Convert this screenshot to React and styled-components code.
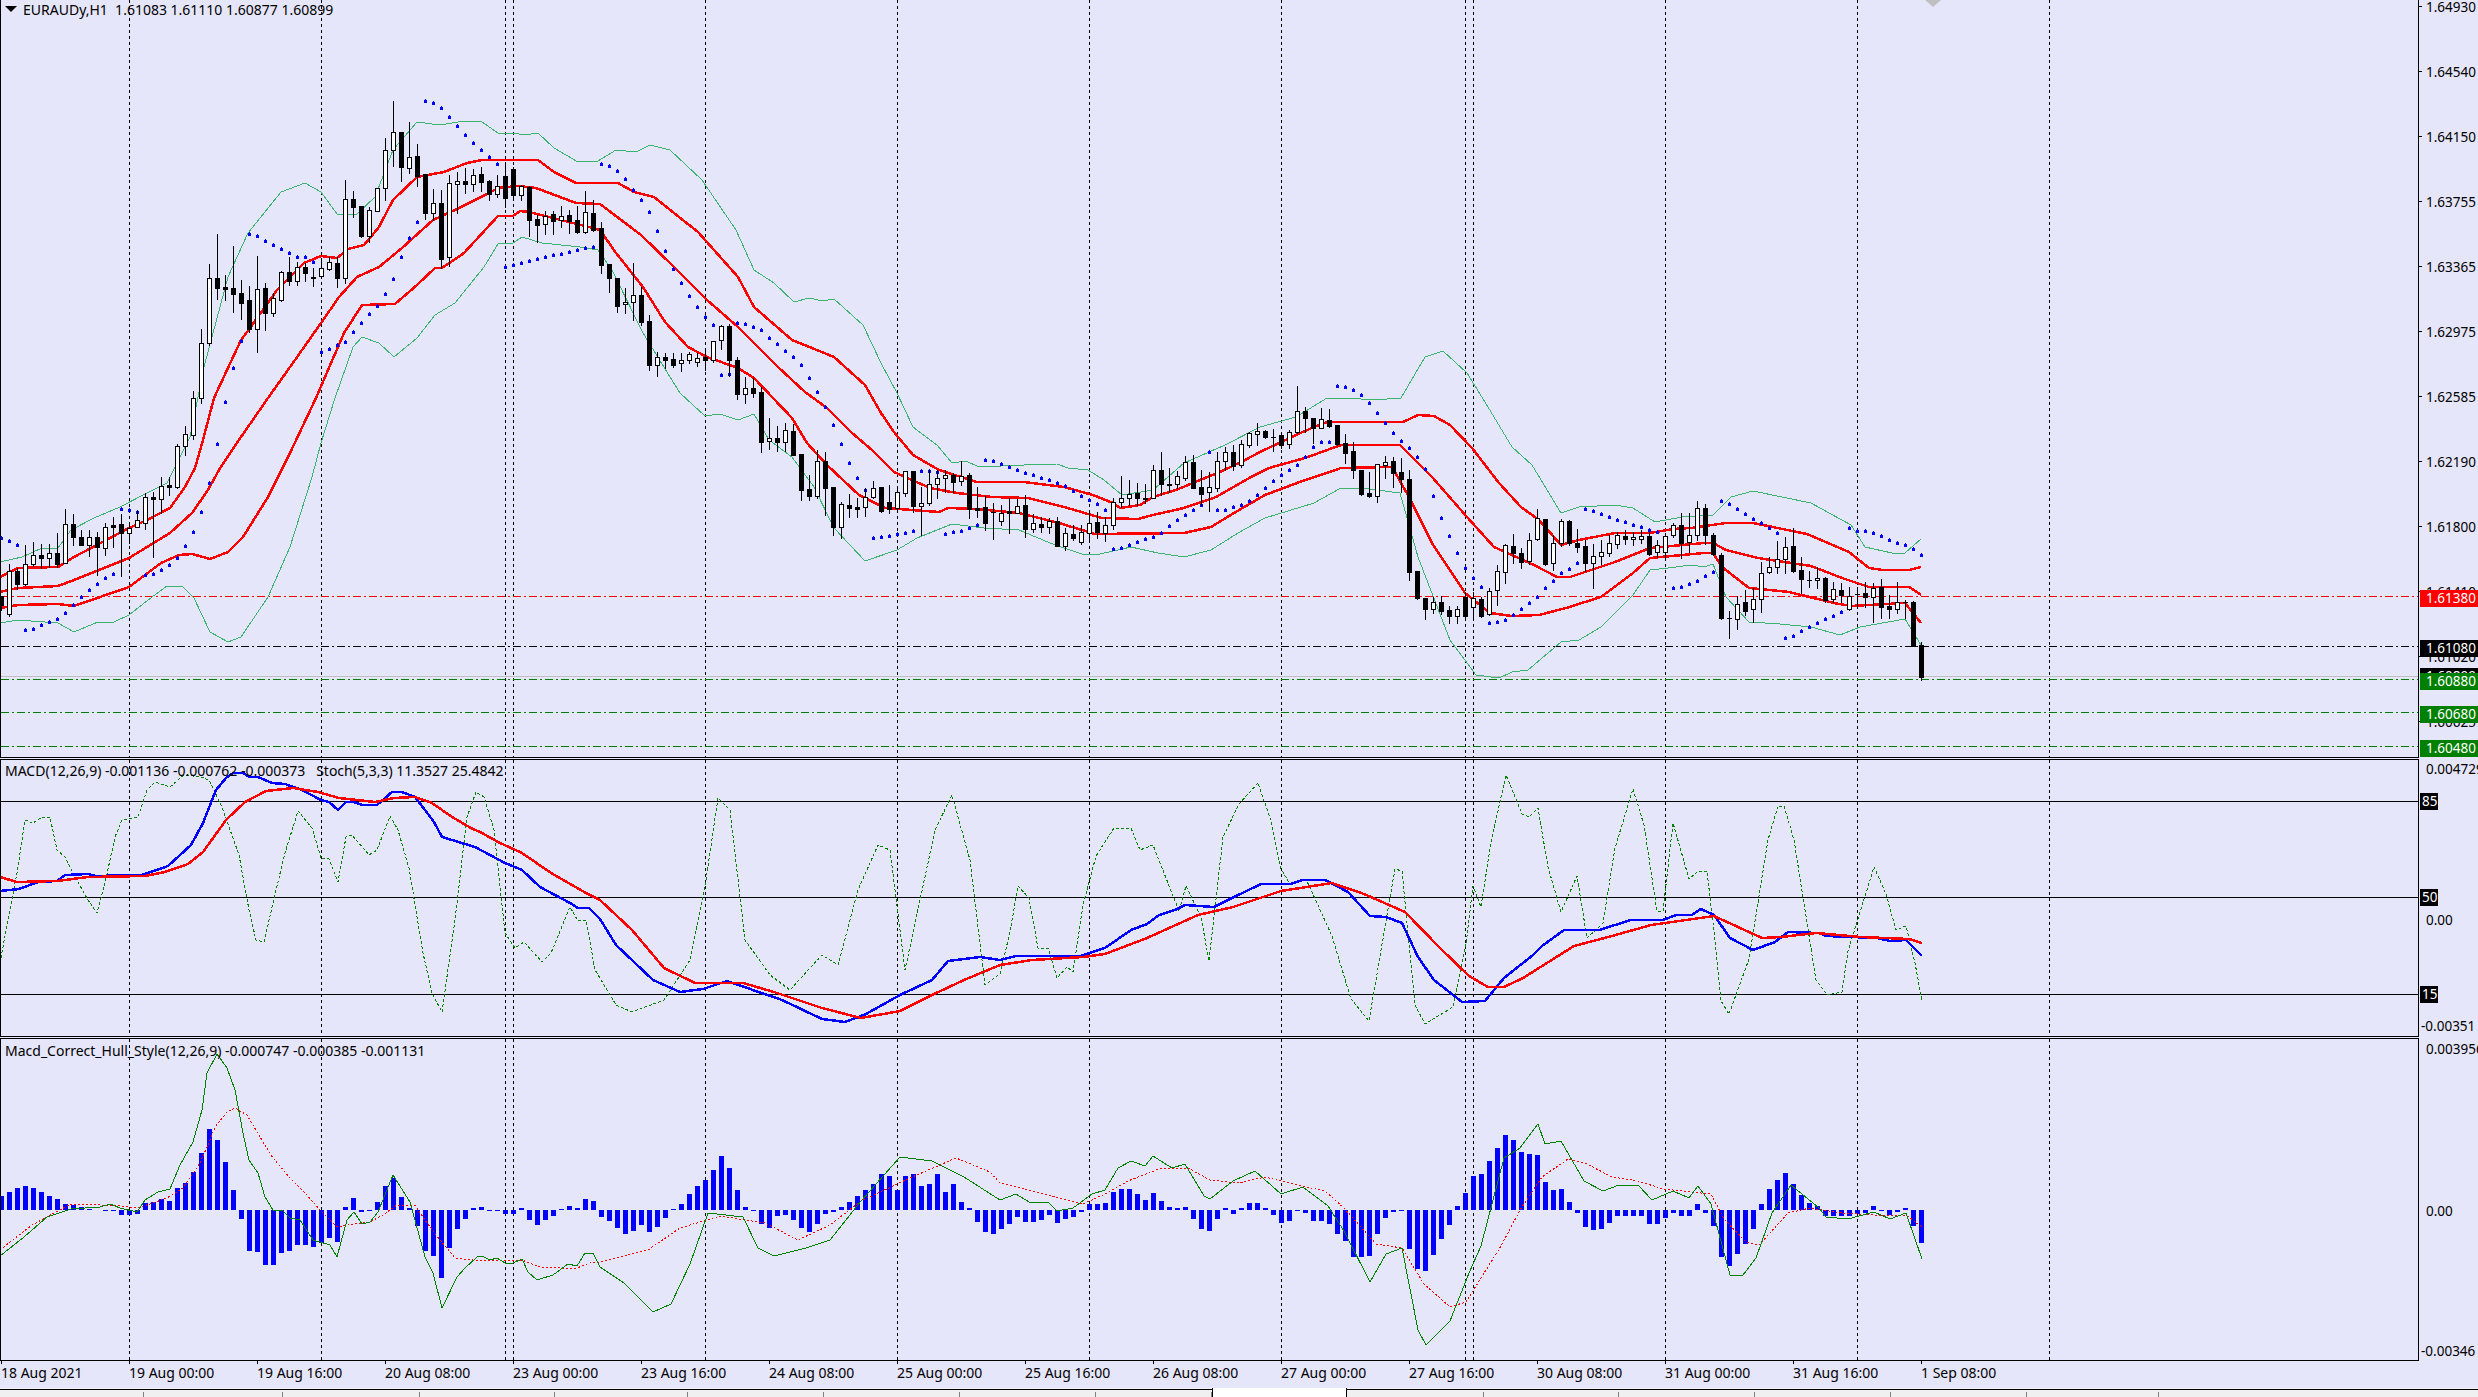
import React from 'react'
import styled, { createGlobalStyle } from 'styled-components'

const GlobalStyle = createGlobalStyle`
  html, body {
    margin: 0;
    padding: 0;
    background: #E6E6FA;
    overflow: hidden;
  }
`

const Terminal = styled.div`
  display: flex;
  flex-direction: column;
  width: 2478px;
  height: 1397px;
  background: #E6E6FA;
  font-family: "Noto Sans", Tahoma, sans-serif;
  font-size: 14px;
  color: #000;
  overflow: hidden;
`

const PaneRow = styled.div`
  display: flex;
  flex: none;
  height: ${p => p.$height}px;
  margin-bottom: ${p => p.$gap || 0}px;
`

const Plot = styled.div`
  position: relative;
  flex: none;
  width: 2418px;
  box-sizing: border-box;
  border-left: 1px solid #000;
  border-top: ${p => (p.$first ? 'none' : '1px solid #000')};
  border-bottom: 1px solid #000;
  overflow: hidden;
`

const Canvas = styled.svg`
  display: block;
  width: 2417px;
  height: 100%;
`

const Legend = styled.div`
  position: absolute;
  left: ${p => p.$left}px;
  top: ${p => p.$top}px;
  line-height: 16px;
  font-size: 14px;
  white-space: pre;
`

const MenuArrow = styled.div`
  position: absolute;
  left: 4px;
  top: 6px;
  width: 0;
  height: 0;
  border-left: 6px solid transparent;
  border-right: 6px solid transparent;
  border-top: 6px solid #000;
`

const Axis = styled.div`
  position: relative;
  flex: none;
  width: 60px;
  box-sizing: border-box;
  border-left: 1px solid #000;
  overflow: hidden;
`

const AxisLabel = styled.div`
  position: absolute;
  left: ${p => p.$left ?? 7}px;
  top: ${p => p.$y - 8}px;
  line-height: 16px;
  font-size: 13.5px;
  white-space: nowrap;
`

const AxisTick = styled.div`
  position: absolute;
  left: 0;
  top: ${p => p.$y}px;
  width: 3px;
  height: 1px;
  background: #000;
`

const PriceTag = styled.div`
  position: absolute;
  left: 1px;
  right: 0;
  top: ${p => p.$top}px;
  height: 17px;
  box-sizing: border-box;
  padding-left: 6px;
  line-height: 17px;
  font-size: 13.5px;
  white-space: nowrap;
  color: #fff;
  background: ${p => p.$bg};
`

const LevelTag = styled.div`
  position: absolute;
  left: 1px;
  top: ${p => p.$y - 8}px;
  width: 18px;
  height: 17px;
  padding-left: 2px;
  box-sizing: border-box;
  line-height: 17px;
  font-size: 13.5px;
  color: #fff;
  background: #000;
`

const TimeAxis = styled.div`
  display: flex;
  flex: none;
  height: 27px;
  padding-left: 1px;
`

const TimeCell = styled.div`
  position: relative;
  flex: none;
  width: 128px;
  padding-top: 3px;
  line-height: 18px;
  font-size: 14px;
  white-space: nowrap;
  &::before {
    content: '';
    position: absolute;
    left: 0;
    top: 0;
    width: 1px;
    height: 3px;
    background: #000;
  }
`

const TabStrip = styled.div`
  display: flex;
  flex: 1;
  padding-top: 1px;
  background: #F0F0F0;
`

const Tab = styled.div`
  position: relative;
  flex: none;
  width: ${p => p.$width}px;
  box-sizing: border-box;
  border-top: 1px solid #000;
  &::after {
    content: '';
    position: absolute;
    right: 0;
    top: 2px;
    bottom: 0;
    width: 1px;
    background: #808080;
  }
`

const ActiveTab = styled.div`
  flex: none;
  width: ${p => p.$width}px;
  margin-top: -1px;
  box-sizing: border-box;
  background: #fff;
  border-left: 1px solid #000;
  border-right: 1px solid #000;
`

const RestOfStrip = styled.div`
  flex: 1;
  border-top: 1px solid #000;
`

const Curve = styled.polyline`
  fill: none;
  stroke: ${p => p.$color};
  stroke-width: ${p => p.$w || 1}px;
  stroke-dasharray: ${p => p.$dash || 'none'};
  stroke-linejoin: round;
  shape-rendering: crispEdges;
`

const Rule = styled.line`
  stroke: ${p => p.$color || '#000'};
  stroke-width: 1px;
  stroke-dasharray: ${p => p.$dash || 'none'};
  shape-rendering: crispEdges;
`

const Fill = styled.path`
  fill: ${p => p.$color};
  shape-rendering: crispEdges;
`

// bar x of index i
const barX = i => 1 + 8 * i

const SEPARATORS = [129, 321, 505, 513, 705, 897, 1089, 1281, 1465, 1473, 1665, 1857, 2049]

// body top, body bottom, high, low, white
const CANDLES = [
  [596,605,596,610,0],[571,614,564,616,1],[571,584,568,589,0],[564,584,545,585,1],[555,564,542,566,1],
  [555,558,544,568,0],[553,558,544,567,1],[553,564,533,567,0],[524,563,509,563,1],[524,537,514,545,0],
  [537,545,530,545,0],[537,545,530,556,1],[537,547,532,575,0],[527,548,523,555,1],[525,527,517,547,0],
  [524,533,514,576,0],[528,533,524,543,1],[520,527,511,527,1],[497,523,493,529,1],[497,499,492,557,0],
  [486,499,477,513,1],[485,487,477,495,0],[446,487,444,488,1],[434,446,426,455,1],[398,435,391,439,1],
  [343,398,329,403,1],[278,343,264,345,1],[278,288,234,299,0],[287,289,275,300,0],[288,294,246,312,0],
  [293,303,280,319,0],[300,329,286,332,0],[289,329,256,352,1],[288,313,283,330,0],[298,313,293,316,1],
  [272,300,271,301,1],[272,281,257,285,0],[267,281,262,285,1],[267,273,263,281,0],[277,278,268,286,0],
  [268,276,258,277,1],[262,269,257,270,1],[263,278,257,287,0],[199,278,180,283,1],[199,207,191,217,0],
  [206,236,206,237,0],[210,236,207,242,1],[188,211,188,211,1],[150,188,138,200,1],[132,150,101,166,1],
  [132,167,132,181,0],[157,168,122,173,1],[156,176,144,186,0],[174,213,174,219,0],[203,213,189,220,1],
  [203,259,190,268,0],[183,257,175,266,1],[181,184,172,213,1],[181,184,168,193,0],[175,184,169,191,1],
  [174,182,167,191,0],[181,194,180,200,0],[186,194,175,197,1],[176,198,165,207,0],[169,195,167,200,0],
  [186,195,185,200,1],[187,220,186,236,0],[219,225,215,242,0],[216,224,211,234,1],[214,221,211,234,0],
  [216,220,206,227,1],[215,221,210,233,0],[220,232,206,233,0],[212,232,191,233,1],[213,230,200,231,0],
  [228,265,222,273,0],[264,278,264,292,0],[278,306,278,312,0],[302,304,288,313,1],[295,302,263,320,1],
  [295,322,287,325,0],[321,365,315,370,0],[357,365,352,376,1],[357,360,353,368,0],[359,365,353,367,0],
  [360,363,353,371,1],[354,360,352,363,1],[358,362,353,366,1],[357,360,350,370,0],[341,360,341,362,1],
  [326,340,325,349,1],[326,360,324,376,0],[360,394,357,399,0],[388,394,377,403,1],[388,393,378,397,0],
  [392,442,387,452,0],[438,441,418,449,1],[438,442,426,451,0],[430,442,423,451,1],[431,455,424,455,0],
  [454,490,454,500,0],[489,496,475,500,0],[461,496,450,498,1],[461,488,452,515,0],[487,527,487,535,0],
  [504,527,502,538,1],[505,508,494,517,0],[507,509,498,517,0],[497,507,488,516,1],[488,497,481,498,1],
  [487,511,487,512,0],[502,509,485,513,0],[492,508,487,510,1],[471,493,471,496,1],[471,506,471,512,0],
  [503,506,487,535,1],[484,503,470,505,1],[478,484,470,498,1],[475,478,470,492,1],[475,482,473,492,0],
  [476,481,461,485,1],[475,509,473,518,0],[508,510,487,517,0],[507,523,496,530,0],[512,512,503,539,0],
  [513,521,505,525,1],[511,513,498,533,0],[506,513,499,513,1],[505,529,495,537,0],[523,529,514,532,1],
  [524,527,517,532,0],[521,527,518,533,1],[521,546,517,546,0],[533,546,528,550,1],[534,538,525,540,0],
  [532,542,525,544,1],[523,533,513,542,1],[522,532,512,538,0],[525,533,517,541,1],[502,525,498,529,1],
  [498,502,476,507,1],[494,498,480,505,1],[493,498,483,505,0],[498,499,484,503,0],[470,498,465,498,1],
  [470,484,452,495,0],[484,485,468,492,0],[476,484,471,488,1],[462,478,456,480,1],[462,488,455,488,0],
  [487,494,470,505,0],[487,492,472,511,1],[461,488,452,491,1],[452,461,447,470,1],[452,466,445,470,0],
  [444,465,440,467,1],[433,445,432,447,1],[431,434,423,445,1],[431,437,430,438,0],[437,437,429,451,0],
  [435,445,432,448,0],[432,444,430,448,1],[411,432,386,433,1],[411,418,407,432,0],[418,428,418,443,0],
  [419,428,408,428,1],[420,426,409,427,0],[425,444,425,445,0],[443,453,434,463,0],[451,470,442,478,0],
  [470,494,470,495,0],[493,496,472,497,0],[464,496,464,502,1],[462,465,456,478,1],[461,473,457,487,0],
  [472,479,458,492,0],[479,572,470,580,0],[571,598,571,599,0],[598,609,598,619,0],[602,609,597,613,1],
  [602,611,596,614,0],[610,616,606,623,0],[609,616,606,623,1],[597,616,592,618,0],[598,607,592,618,1],
  [599,616,597,617,0],[591,614,588,615,1],[571,590,565,605,1],[545,572,544,583,1],[546,553,534,563,0],
  [553,562,548,568,0],[540,561,533,564,1],[518,539,509,540,1],[519,564,519,565,0],[543,563,535,570,1],
  [521,543,519,546,1],[521,543,520,545,0],[543,547,529,552,0],[546,563,540,571,0],[556,563,544,588,1],
  [552,556,540,564,1],[543,553,535,556,1],[535,544,532,548,1],[536,539,530,544,0],[537,539,532,545,1],
  [536,539,530,543,1],[536,554,532,555,0],[545,552,540,557,1],[536,552,533,557,1],[525,535,523,537,1],
  [525,543,513,558,0],[535,542,513,552,1],[508,535,501,540,1],[508,535,504,544,0],[535,554,533,555,0],
  [555,618,553,619,0],[618,618,611,638,0],[604,619,596,629,1],[602,611,590,615,0],[599,609,588,622,1],
  [573,599,562,612,1],[567,572,557,573,1],[559,567,541,573,1],[547,559,537,573,1],[546,571,528,572,0],
  [570,579,557,593,0],[580,580,571,587,0],[578,580,567,588,1],[578,600,577,602,0],[589,599,582,602,1],
  [590,595,583,602,0],[596,609,587,610,1],[594,594,587,608,0],[593,597,582,607,0],[588,597,583,622,1],
  [587,607,579,618,0],[606,609,595,618,0],[602,609,582,613,1],[602,602,600,618,0],[602,646,601,646,0],
  [645,677,642,680,0]
]

const SAR = [
  538,541,545,630,629,625,622,619,613,605,597,590,584,578,574,509,510,512,575,574,
  570,565,558,546,532,512,483,444,402,368,341,234,236,241,245,249,253,257,257,262,
  352,349,345,342,332,323,314,306,294,279,257,238,222,101,103,108,117,126,135,143,
  150,157,164,267,265,263,261,259,257,255,254,252,250,248,247,164,166,171,179,190,
  200,212,231,251,269,283,296,307,317,325,375,374,323,324,327,330,338,344,351,357,
  365,378,392,407,425,444,463,478,490,538,537,536,534,533,531,471,471,472,534,532,
  531,528,525,460,461,464,467,470,473,475,478,480,483,486,491,496,500,504,510,549,
  548,545,542,539,537,533,526,520,515,510,505,452,510,510,507,505,501,495,488,481,
  475,470,465,457,447,442,442,386,387,390,395,403,413,423,433,441,448,457,469,496,
  518,536,553,568,578,587,623,622,620,615,609,603,597,588,581,573,569,563,509,511,
  514,517,520,522,525,527,530,532,null,588,587,584,581,576,572,501,504,509,514,519,
  523,528,533,638,636,631,627,623,619,616,612,528,531,531,533,536,540,543,545,549,555
]

const UPPER_BAND = '0,577 18,568 58,567 74,557 112,537 129,528 147,520 170,508 185,487 195,468 203,440 214,398 241,340 250,328 277,290 304,263 321,256 337,258 348,249 364,245 379,227 393,200 417,177 444,172 467,163 482,160 538,160 554,172 576,183 618,183 634,192 654,197 679,217 698,232 738,277 754,307 792,340 807,346 834,357 865,385 881,413 894,432 913,455 939,470 977,482 1024,482 1064,487 1093,495 1113,503 1120,508 1140,505 1153,497 1176,490 1200,480 1220,472 1245,460 1260,452 1296,435 1314,427 1327,422 1403,422 1418,415 1434,416 1450,425 1472,448 1499,483 1521,507 1539,520 1561,545 1579,540 1615,533 1650,533 1673,529 1691,528 1726,523 1753,523 1807,534 1849,552 1869,568 1883,570 1909,570 1921,567'
const MIDDLE_BAND = '0,592 18,588 58,586 74,580 129,558 170,533 192,513 208,490 219,470 241,437 268,398 295,360 321,323 339,297 357,277 379,267 402,248 433,220 455,210 489,193 498,188 518,186 536,188 576,203 600,204 641,235 674,267 707,300 738,327 778,367 805,392 827,408 852,433 872,450 894,472 930,488 957,493 992,497 1028,498 1064,507 1102,518 1138,519 1153,515 1184,508 1216,497 1251,477 1269,468 1305,458 1341,445 1400,445 1432,477 1467,517 1494,547 1534,565 1557,577 1570,577 1615,562 1650,548 1704,543 1713,543 1726,550 1758,558 1811,566 1842,578 1869,587 1909,587 1921,595'
const LOWER_BAND = '0,608 18,605 58,604 74,606 129,587 161,563 179,555 192,554 210,559 228,552 243,537 268,497 290,453 316,398 344,333 362,305 395,304 417,285 435,268 442,268 464,253 498,216 513,216 520,211 529,212 589,227 600,230 616,253 643,287 665,322 688,347 707,357 738,368 754,378 792,418 807,443 827,465 859,495 885,508 939,512 948,508 977,509 1019,513 1059,523 1095,534 1184,533 1211,527 1234,513 1265,495 1305,480 1327,473 1341,468 1392,467 1409,497 1432,543 1465,593 1490,613 1512,616 1539,615 1566,608 1601,597 1633,573 1650,558 1704,553 1713,553 1722,567 1749,588 1789,592 1834,603 1851,606 1905,603 1921,623'
const GREEN_UPPER = '0,562 22,557 42,548 58,548 71,530 94,518 120,507 147,493 167,483 190,437 204,367 228,277 248,233 281,192 305,183 321,192 337,214 357,214 375,197 393,150 417,122 440,125 464,121 482,122 498,133 513,133 525,135 538,133 554,148 578,162 598,161 616,150 636,152 650,145 670,150 702,180 736,230 754,270 774,283 794,302 809,298 823,301 834,299 863,325 881,363 897,393 913,427 937,445 952,463 966,461 979,467 1024,465 1057,464 1068,468 1088,470 1104,480 1122,495 1153,490 1184,463 1225,445 1260,427 1296,417 1327,398 1347,398 1374,400 1401,398 1425,357 1443,351 1467,373 1488,407 1512,447 1532,465 1561,513 1579,507 1615,505 1633,508 1655,522 1682,517 1713,515 1731,497 1753,491 1811,503 1851,525 1865,547 1892,553 1905,553 1921,539'
const GREEN_LOWER = '0,623 18,620 58,623 74,632 98,622 114,622 129,615 152,597 167,586 183,587 194,598 210,632 228,642 241,637 268,597 290,547 312,477 321,443 335,398 353,347 362,337 379,343 394,357 417,338 435,315 455,303 484,267 498,244 513,243 522,237 542,243 580,247 598,250 612,270 643,333 670,377 680,393 705,416 720,414 738,420 754,414 769,440 792,457 814,487 834,528 865,561 897,550 917,538 952,524 984,528 1019,530 1055,545 1082,554 1100,554 1131,547 1158,553 1184,557 1211,550 1238,533 1265,518 1314,503 1341,488 1369,489 1400,493 1418,557 1450,640 1476,675 1499,678 1512,672 1528,670 1561,642 1579,640 1601,627 1633,595 1650,570 1668,568 1691,565 1704,567 1713,564 1726,597 1749,622 1780,624 1811,627 1840,635 1860,627 1905,619 1921,645'

const MACD_LINE = '0,891 19,889 38,882 57,881 65,875 88,874 96,876 142,875 168,866 191,845 203,823 216,790 226,778 233,773 243,773 249,777 258,777 272,783 285,784 302,790 321,800 329,802 338,810 346,802 354,802 362,805 377,805 392,792 402,792 415,797 425,810 434,822 442,837 475,847 505,863 522,870 540,887 570,903 578,908 589,908 600,919 616,945 653,980 680,992 703,989 727,981 750,989 782,1000 822,1019 845,1022 866,1014 900,995 932,980 948,961 980,957 1000,960 1016,956 1080,956 1105,948 1131,930 1147,924 1159,915 1175,910 1185,905 1214,907 1230,899 1261,884 1290,884 1303,880 1325,880 1348,892 1370,916 1386,917 1402,923 1418,957 1434,980 1462,1002 1485,1001 1504,978 1533,955 1542,946 1564,930 1599,930 1631,920 1663,920 1676,915 1692,915 1701,909 1714,915 1730,938 1753,950 1775,942 1788,932 1819,933 1826,936 1877,938 1890,941 1906,940 1922,956'
const SIGNAL_LINE = '0,877 17,882 57,881 88,877 145,876 165,872 188,864 203,852 226,820 245,802 266,791 293,788 318,792 339,798 375,802 394,798 415,797 432,803 452,817 471,828 482,833 498,842 522,853 551,873 586,893 600,900 632,930 664,968 695,983 743,983 774,992 822,1008 861,1018 900,1011 932,995 964,980 1000,965 1032,960 1083,957 1105,954 1147,938 1198,915 1233,907 1281,891 1332,883 1364,894 1405,912 1440,948 1469,976 1488,987 1504,987 1523,978 1574,946 1612,936 1651,925 1714,916 1762,938 1781,937 1816,933 1861,937 1909,939 1922,943'
const STOCH_LINE = '0,963 8,920 17,873 25,820 33,823 42,817 50,817 57,850 65,857 73,873 88,900 97,913 105,883 115,837 122,820 138,817 147,790 155,782 170,787 184,775 201,777 209,780 222,807 239,855 249,910 256,940 264,942 276,890 285,853 298,811 312,828 321,858 329,859 338,882 346,837 352,835 369,855 377,850 390,816 398,830 409,868 423,953 432,993 442,1012 455,920 467,817 476,792 484,797 494,830 505,933 515,948 524,942 542,962 551,953 570,907 578,921 586,920 595,970 600,978 616,1005 632,1012 664,1000 690,960 706,880 718,798 730,810 745,940 770,975 790,990 822,955 838,965 858,890 878,845 890,850 905,970 935,830 952,795 970,860 985,985 1000,974 1010,932 1018,886 1029,898 1038,948 1048,948 1057,978 1067,967 1073,972 1083,905 1096,856 1114,828 1131,828 1140,850 1153,845 1179,911 1186,886 1201,917 1209,961 1223,837 1239,804 1258,783 1271,821 1281,869 1290,884 1306,879 1332,936 1351,999 1369,1021 1386,921 1395,869 1402,871 1415,1005 1425,1024 1453,1007 1466,944 1473,886 1481,907 1491,842 1506,775 1522,814 1529,817 1538,808 1548,867 1561,912 1577,876 1587,938 1603,923 1615,848 1633,789 1644,825 1657,911 1663,911 1673,823 1689,879 1698,871 1707,871 1714,932 1721,1001 1729,1014 1749,959 1768,840 1778,806 1784,806 1794,840 1816,980 1827,995 1842,992 1848,951 1874,867 1886,894 1896,930 1906,926 1915,963 1922,1001'

const HULL_BARS = [
  14,18,22,24,22,18,14,11,6,5,3,1,0,-1,-1,-5,-5,-4,7,8,
  11,9,22,27,38,57,81,70,48,20,-9,-41,-42,-55,-55,-43,-41,-35,-35,-37,
  -33,-28,-32,3,12,-2,-1,8,24,32,13,2,-16,-41,-46,-68,-38,-19,-9,2,
  3,-1,-1,-4,-4,2,-10,-15,-10,-6,1,4,2,11,9,-7,-11,-18,-24,-21,
  -15,-22,-17,-8,1,6,16,24,30,40,54,42,20,3,-1,-14,-18,-6,-5,-10,
  -18,-22,-14,-4,-2,3,8,14,20,26,36,34,20,34,36,24,26,36,18,26,
  8,2,-12,-22,-24,-19,-14,-7,-12,-12,-10,-5,-13,-9,-7,-2,6,6,7,18,
  21,21,16,10,17,9,3,2,3,-9,-19,-21,-9,2,-4,2,7,7,2,-5,
  -13,-11,-1,-3,-11,-11,-14,-24,-31,-47,-47,-46,-24,-8,-2,-1,-39,-59,-61,-45,
  -29,-15,4,17,34,36,49,62,75,70,58,56,55,28,20,21,8,-3,-17,-20,
  -19,-13,-6,-6,-6,-6,-14,-14,-8,-3,-6,-6,6,-3,-16,-47,-56,-44,-34,-19,
  6,21,30,37,26,15,7,4,-6,-6,-6,-6,-4,-3,4,-1,-5,-2,2,-16,-33
]
const HULL_ZERO = 1210

const HULL_LINE = '0,1256 24,1237 47,1217 71,1209 100,1207 110,1204 120,1208 137,1212 145,1200 158,1192 170,1189 180,1165 193,1142 202,1110 207,1073 217,1054 227,1068 235,1090 243,1133 249,1160 258,1173 265,1197 273,1210 282,1210 290,1218 300,1220 313,1240 330,1245 337,1257 347,1220 354,1212 362,1224 370,1222 378,1212 393,1175 410,1202 425,1257 433,1273 442,1308 457,1277 465,1268 477,1257 482,1256 490,1260 497,1258 505,1263 513,1263 522,1259 528,1272 537,1280 553,1275 568,1264 577,1266 585,1253 593,1253 600,1267 624,1283 653,1312 671,1304 690,1264 708,1213 743,1217 758,1248 774,1256 806,1248 830,1240 861,1201 900,1157 932,1161 964,1177 1000,1200 1016,1194 1029,1202 1048,1202 1057,1211 1073,1208 1092,1194 1105,1190 1118,1168 1131,1161 1145,1166 1153,1156 1172,1168 1185,1164 1204,1196 1210,1199 1233,1181 1255,1171 1281,1194 1303,1187 1328,1206 1344,1231 1370,1282 1386,1254 1402,1248 1418,1330 1426,1345 1450,1321 1469,1273 1481,1246 1504,1158 1520,1148 1538,1124 1545,1144 1561,1141 1584,1181 1603,1191 1619,1185 1638,1185 1652,1200 1673,1191 1689,1198 1698,1186 1711,1204 1730,1275 1743,1275 1756,1258 1772,1213 1791,1185 1819,1208 1826,1217 1848,1219 1874,1212 1890,1219 1906,1213 1922,1259'
const HULL_SIGNAL = '0,1250 32,1225 71,1204 100,1205 115,1205 137,1208 153,1203 167,1198 183,1188 200,1163 210,1140 215,1127 227,1112 235,1108 247,1115 260,1137 273,1158 290,1178 307,1195 320,1210 337,1227 353,1224 370,1222 383,1215 397,1205 415,1205 425,1220 440,1240 455,1258 473,1260 503,1260 522,1260 540,1267 560,1268 577,1268 590,1263 600,1262 648,1250 680,1228 720,1216 765,1223 798,1240 830,1225 861,1201 910,1178 956,1158 990,1172 1000,1183 1051,1196 1083,1204 1105,1194 1128,1181 1159,1169 1188,1168 1210,1180 1239,1183 1265,1177 1293,1184 1325,1191 1344,1208 1376,1244 1402,1248 1424,1284 1450,1307 1466,1302 1501,1246 1520,1210 1542,1177 1568,1159 1587,1164 1612,1177 1638,1181 1663,1189 1711,1194 1724,1219 1746,1242 1759,1245 1788,1213 1810,1208 1842,1213 1874,1215 1906,1215 1922,1227'

const MAIN_TICKS = [
  [6, '1.64930'], [71, '1.64540'], [136, '1.64150'], [201, '1.63755'], [266, '1.63365'], [331, '1.62975'],
  [396, '1.62585'], [461, '1.62190'], [526, '1.61800'], [591, '1.61410'], [656, '1.61020'], [721, '1.60625'],
]

const PRICE_TAGS = [
  [590, '1.61380', '#FF0000'], [640, '1.61080', '#000'], [668, '1.60899', '#000'],
  [673, '1.60880', '#008000'], [706, '1.60680', '#008000'], [740, '1.60480', '#008000'],
]

const TIME_LABELS = [
  '18 Aug 2021', '19 Aug 00:00', '19 Aug 16:00', '20 Aug 08:00', '23 Aug 00:00', '23 Aug 16:00',
  '24 Aug 08:00', '25 Aug 00:00', '25 Aug 16:00', '26 Aug 08:00', '27 Aug 00:00', '27 Aug 16:00',
  '30 Aug 08:00', '31 Aug 00:00', '31 Aug 16:00', '1 Sep 08:00',
]

const LEFT_TABS = [144, 139, 137, 135, 133, 136, 136, 136]
const RIGHT_TABS = [137, 135, 136, 136, 136, 132]

function candlePaths() {
  let dark = ''
  let light = ''
  CANDLES.forEach(([top, bottom, high, low, white], i) => {
    const x = barX(i)
    dark += `M${x} ${high}h1V${low + 1}h-1z`
    dark += `M${x - 2} ${top}h5V${bottom + 1}h-5z`
    if (white && bottom - top >= 2) light += `M${x - 1} ${top + 1}h3V${bottom}h-3z`
  })
  return { dark, light }
}

function sarPath() {
  return SAR.map((y, i) => {
    if (y == null) return ''
    const x = barX(i)
    return `M${x - 1} ${y - 1}h3v3h-3zM${x} ${y - 2}h1v1h-1z`
  }).join('')
}

function histPath() {
  return HULL_BARS.map((v, i) => {
    if (v === 0) return ''
    const x = barX(i)
    const top = v > 0 ? HULL_ZERO - v : HULL_ZERO
    return `M${x - 2} ${top}h5v${Math.abs(v)}h-5z`
  }).join('')
}

const Separators = ({ top, bottom }) => (
  <>
    {SEPARATORS.map(x => (
      <Rule key={x} x1={x + 0.5} x2={x + 0.5} y1={top} y2={bottom} $dash="3 3" />
    ))}
  </>
)

const HLine = ({ y, color, dash }) => (
  <Rule x1={1} x2={2418} y1={y + 0.5} y2={y + 0.5} $color={color} $dash={dash} />
)

const MainPane = () => {
  const { dark, light } = candlePaths()
  return (
    <PaneRow $height={758} $gap={1}>
      <Plot $first>
        <Canvas viewBox="1 0 2417 757" preserveAspectRatio="none">
          <Separators top={0} bottom={757} />
          <HLine y={596} color="#FF0000" dash="8 3 2 3" />
          <HLine y={646} color="#000" dash="8 3 2 3" />
          <HLine y={676} color="#C0C0C0" />
          <HLine y={679} color="#008000" dash="8 3 2 3" />
          <HLine y={712} color="#008000" dash="8 3 2 3" />
          <HLine y={746} color="#008000" dash="8 3 2 3" />
          <Curve points={GREEN_UPPER} $color="#3CB371" />
          <Curve points={GREEN_LOWER} $color="#3CB371" />
          <Curve points={UPPER_BAND} $color="#FF0000" $w={2.5} />
          <Curve points={MIDDLE_BAND} $color="#FF0000" $w={2.5} />
          <Curve points={LOWER_BAND} $color="#FF0000" $w={2.5} />
          <Fill d={sarPath()} $color="#0000FF" />
          <Fill d={dark} $color="#000" />
          <Fill d={light} $color="#fff" />
          <polygon points="1925,0 1941,0 1933,7" fill="#C0C0C0" />
        </Canvas>
        <MenuArrow />
        <Legend $left={22} $top={2}>EURAUDy,H1  1.61083 1.61110 1.60877 1.60899</Legend>
      </Plot>
      <Axis>
        {MAIN_TICKS.map(([y, text]) => (
          <React.Fragment key={text}>
            <AxisTick $y={y} />
            <AxisLabel $y={y + 1}>{text}</AxisLabel>
          </React.Fragment>
        ))}
        {PRICE_TAGS.map(([top, text, bg]) => (
          <PriceTag key={text} $top={top} $bg={bg}>{text}</PriceTag>
        ))}
      </Axis>
    </PaneRow>
  )
}

const MacdPane = () => (
  <PaneRow $height={278} $gap={1}>
    <Plot>
      <Canvas viewBox="1 760 2417 276" preserveAspectRatio="none">
        <Separators top={760} bottom={1036} />
        <HLine y={801} />
        <HLine y={897} />
        <HLine y={994} />
        <Curve points={STOCH_LINE} $color="#008000" $dash="3 2" />
        <Curve points={MACD_LINE} $color="#0000FF" $w={2.5} />
        <Curve points={SIGNAL_LINE} $color="#FF0000" $w={2.5} />
      </Canvas>
      <Legend $left={4} $top={3}>MACD(12,26,9) -0.001136 -0.000762 -0.000373   Stoch(5,3,3) 11.3527 25.4842</Legend>
    </Plot>
    <Axis>
      <AxisLabel $y={10}>0.004729</AxisLabel>
      <LevelTag $y={42}>85</LevelTag>
      <LevelTag $y={138}>50</LevelTag>
      <AxisLabel $y={161}>0.00</AxisLabel>
      <LevelTag $y={235}>15</LevelTag>
      <AxisLabel $y={267} $left={2}>-0.00351</AxisLabel>
    </Axis>
  </PaneRow>
)

const HullPane = () => (
  <PaneRow $height={323}>
    <Plot>
      <Canvas viewBox="1 1039 2417 321" preserveAspectRatio="none">
        <Separators top={1039} bottom={1360} />
        <Fill d={histPath()} $color="#0000FF" />
        <Curve points={HULL_SIGNAL} $color="#FF0000" $dash="2 2" />
        <Curve points={HULL_LINE} $color="#008000" />
      </Canvas>
      <Legend $left={4} $top={4}>Macd_Correct_Hull_Style(12,26,9) -0.000747 -0.000385 -0.001131</Legend>
    </Plot>
    <Axis>
      <AxisLabel $y={11}>0.003956</AxisLabel>
      <AxisLabel $y={173}>0.00</AxisLabel>
      <AxisLabel $y={313} $left={2}>-0.00346</AxisLabel>
    </Axis>
  </PaneRow>
)

export default function App() {
  return (
    <Terminal>
      <GlobalStyle />
      <MainPane />
      <MacdPane />
      <HullPane />
      <TimeAxis>
        {TIME_LABELS.map(label => <TimeCell key={label}>{label}</TimeCell>)}
      </TimeAxis>
      <TabStrip>
        {LEFT_TABS.map((w, i) => <Tab key={i} $width={w} />)}
        <Tab $width={116} />
        <ActiveTab $width={135} />
        {RIGHT_TABS.map((w, i) => <Tab key={i} $width={w} />)}
        <RestOfStrip />
      </TabStrip>
    </Terminal>
  )
}
